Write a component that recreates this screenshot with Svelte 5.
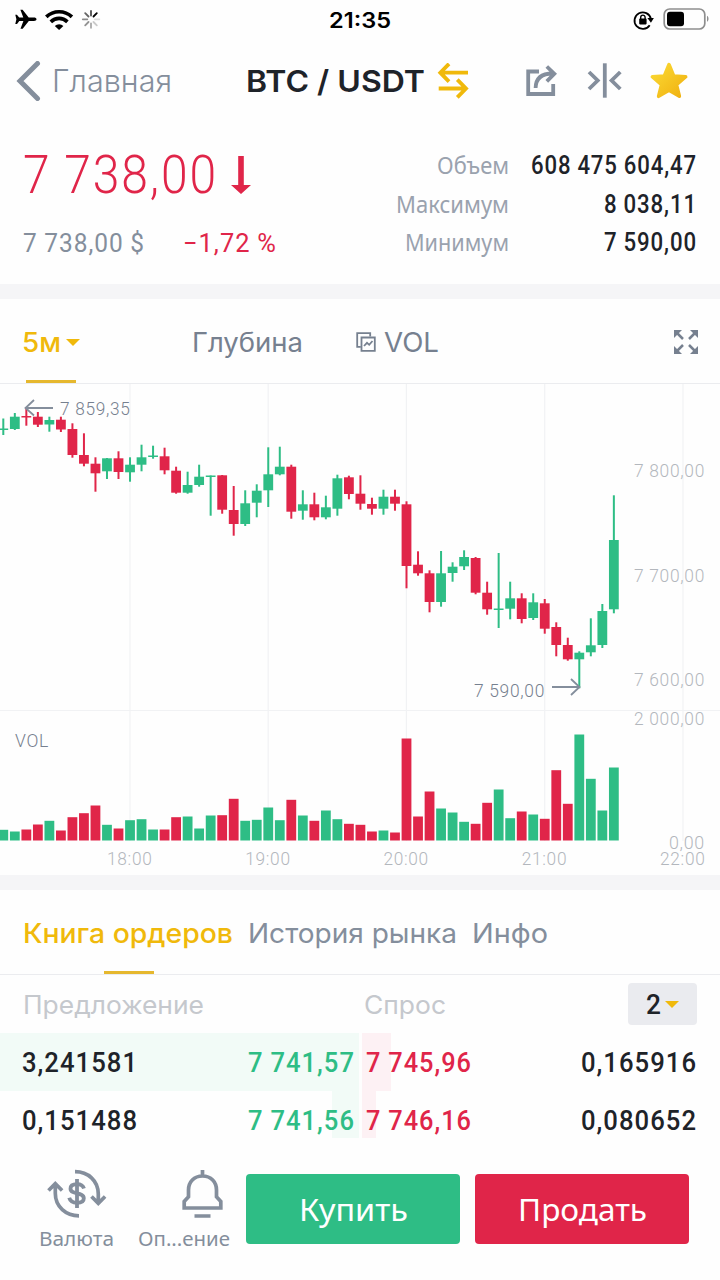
<script lang="ts">
  type Candle = [up: number, high: number, top: number, bottom: number, low: number, volume: number]

  const green = '#2ebd85'
  const red = '#e02549'

  // y positions on the chart, last value is the height of the volume bar
  const candles: Candle[] = [
    [1, 418.5, 428.5, 430, 435, 10.7], [1, 413, 416.7, 429, 430, 9],
    [0, 407, 416, 417.5, 425.7, 11], [0, 412, 416.7, 424.7, 427, 16],
    [1, 416.7, 420, 424.5, 431.7, 19.7], [0, 416.7, 419.7, 429.5, 432, 10],
    [0, 423.3, 429, 455, 457.7, 23.3], [0, 433.3, 455, 463.7, 466.3, 27.3],
    [0, 457.3, 463.7, 473.3, 491.7, 35], [1, 458, 458.3, 471.3, 479, 15.7],
    [0, 451.3, 458.3, 472, 479, 12], [1, 457.3, 464.7, 472.3, 481.7, 20.3],
    [1, 444.7, 457.3, 464.7, 471.3, 21.3], [1, 445.7, 455.5, 457, 458.7, 11],
    [0, 447.7, 456.3, 470.3, 474.3, 11], [0, 466.7, 470.7, 492.7, 493.7, 23.3],
    [1, 471.7, 485, 492.7, 493.7, 24], [1, 464.7, 476.7, 485, 486.7, 12],
    [1, 475.5, 475.5, 477, 515.7, 25], [0, 475, 475.3, 509.7, 513.7, 25.3],
    [0, 486, 510, 524, 535.7, 41.7], [1, 490.3, 503.3, 524, 526, 19.7],
    [1, 484.3, 490.7, 502.7, 517.3, 20.7], [1, 447.3, 474.3, 490.3, 507, 33],
    [1, 446.7, 466.7, 474.3, 475.3, 20.3], [0, 464.7, 466.7, 511.7, 518.7, 40.7],
    [1, 490.3, 504.3, 510.7, 519.7, 25], [0, 492.7, 504.3, 517.3, 520.3, 19.7],
    [1, 495.7, 507.3, 517.3, 519.3, 30], [1, 474.7, 478.3, 508.7, 515.7, 21.3],
    [0, 475.7, 477.3, 494, 499.3, 16.7], [0, 475.3, 493.7, 503.7, 509.7, 15.7],
    [0, 497.7, 504, 508.7, 514.7, 9], [1, 489.7, 496.7, 508.7, 514.7, 10],
    [0, 489.7, 496.7, 503.7, 510.7, 8], [0, 501.3, 504.3, 566, 588.3, 102],
    [0, 551.3, 564.7, 573.3, 575.7, 24], [0, 570.3, 573.3, 602, 612.3, 49],
    [1, 551, 573.3, 602, 606.7, 32], [1, 562.3, 566.7, 573, 581.7, 28],
    [1, 550.3, 557, 566.3, 570, 18.7], [0, 557, 558, 592.7, 594.3, 16.7],
    [0, 581.7, 592.7, 609.3, 614.7, 37.7], [1, 553, 608.5, 610, 628, 51],
    [1, 581.7, 598.3, 608.7, 619.3, 22.3], [0, 593.3, 598.3, 619, 623.3, 29],
    [1, 593.3, 602.3, 618, 620, 26], [0, 599, 603.3, 628.7, 633.7, 21.7],
    [0, 622.3, 627, 645, 656.3, 70.3], [0, 637.7, 645, 659.3, 660.7, 36.7],
    [1, 651.3, 652.7, 659.3, 688.3, 106], [1, 618.3, 645.3, 652.3, 656.3, 61.7],
    [1, 604, 611, 645, 648, 30], [1, 495.3, 540, 609.3, 613.3, 73]
  ]
  const step = 11.52
  const volumeBase = 840.5

  const hours = [
    { x: 130, label: '18:00' },
    { x: 268.2, label: '19:00' },
    { x: 406.4, label: '20:00' },
    { x: 544.7, label: '21:00' },
    { x: 683, label: '22:00' }
  ]
  const scale = [
    { y: 477, label: '7 800,00', width: 71 },
    { y: 581.7, label: '7 700,00', width: 71 },
    { y: 686, label: '7 600,00', width: 71 },
    { y: 724.5, label: '2 000,00', width: 71 },
    { y: 848.7, label: '0,00', width: 36 }
  ]
  const stats = [
    { label: 'Объем', labelWidth: 72, value: '608 475 604,47', width: 166 },
    { label: 'Максимум', labelWidth: 113, value: '8 038,11', width: 93 },
    { label: 'Минимум', labelWidth: 104, value: '7 590,00', width: 93 }
  ]
  const orders = [
    { bidAmount: '3,241581', bid: '7 741,57', bidDepth: 358.5, ask: '7 745,96', askAmount: '0,165916', askDepth: 28.5 },
    { bidAmount: '0,151488', bid: '7 741,56', bidDepth: 26.5, ask: '7 746,16', askAmount: '0,080652', askDepth: 14 }
  ]

  // Squeezes or stretches a line of text so it takes exactly `width` pixels
  function fit(node: HTMLElement, width: number) {
    const natural = node.getBoundingClientRect().width
    node.style.transformOrigin = '0 50%'
    node.style.transform = `scaleX(${width / natural})`
    node.style.marginRight = `${width - natural}px`
  }
</script>

<div class="app">
  <div class="status">
    <div class="status-left">
      <svg width="90" height="24" viewBox="14 8 90 24">
        <path d="M36.5 19.3c0-1.1-1.2-1.7-2.6-1.7h-5.2L22.6 9.8h-2.2l2.9 7.8h-4.1l-2.3-2.9h-1.6l1.1 4.6-1.1 4.6H17l2.3-2.9h4.1l-2.9 7.8h2.2l6.1-7.8h5.2c1.4 0 2.5-.6 2.5-1.7z" />
        <g fill="none" stroke="#000" stroke-width="3.7">
          <path d="M46.3 16.9a18.5 18.5 0 0 1 25.600 0" />
          <path d="M50.8 21.8a12 12 0 0 1 16.6 0" />
        </g>
        <path d="M54.8 25.9a6.2 6.2 0 0 1 8.600 0l-4.3 4z" />
        <g stroke="#000" stroke-width="1.8" stroke-linecap="round">
          <path d="M93.5 16.5l3.3-3.3" />
          <path d="M91 15.5v-4.5" opacity=".7" />
          <path d="M88.500 16.500l-3.300-3.300" opacity=".6" />
          <path d="M87.3 19.3h-4.5" opacity=".45" />
          <path d="M88.5 22l-3.3 3.3" opacity=".42" />
          <path d="M91 23.3v4.5" opacity=".33" />
          <path d="M93.5 22l3.3 3.3" opacity=".2" />
          <path d="M94.8 19.3h4.5" opacity=".12" />
        </g>
      </svg>
    </div>
    <span class="time"><span class="fit" use:fit={62}>21:35</span></span>
    <svg class="status-right" width="80" height="24" viewBox="630 8 80 24">
      <path d="M649.7 25.3a8.3 8.3 0 1 1 1.2-6.5" fill="none" stroke="#000" stroke-width="1.8" />
      <path d="M647.4 18h6.5l-3 4.7z" />
      <rect x="639.2" y="18.6" width="7.4" height="5.8" rx=".8" />
      <path d="M640.7 19v-1.7a2.200 2.200 0 0 1 4.400 0V19" fill="none" stroke="#000" stroke-width="1.4" />
      <rect x="664.2" y="9" width="40.6" height="20" rx="5.5" fill="none" stroke="#8e8e8e" stroke-width="1.7" />
      <rect x="667" y="11.7" width="17" height="14.6" rx="3" />
      <path d="M707 15.8c2 1 2 5 0 6z" fill="#8e8e8e" />
    </svg>
  </div>

  <header>
    <button class="back" aria-label="Назад">
      <svg width="26" height="40" viewBox="0 0 26 40">
        <path d="M22.5 2.500L5 20l17.5 17.500" fill="none" stroke="#848e9c" stroke-width="5" stroke-linecap="round" />
      </svg>
      <span class="fit" use:fit={120}>Главная</span>
    </button>
    <h1>
      <span class="fit" use:fit={179}>BTC / USDT</span>
      <svg width="32" height="36" viewBox="437 63 32 36" fill="none" stroke="#f0b90b" stroke-width="3.8">
        <path d="M468 72.7H441M449 63.8l-8.7 8.900 8.700 8.900" />
        <path d="M438.7 88.5h27M457.3 79.6l8.700 8.900-8.700 8.900" />
      </svg>
    </h1>
    <svg class="tools" width="170" height="40" viewBox="522 61 170 40">
      <g fill="none" stroke="#848e9c" stroke-width="3.8">
        <path d="M539 71.5H528.2V94H553.2V84" />
        <path d="M535.6 88c.2-9 5.500-14.500 17-14.500M546.800 66.500l7.500 7.300-7.500 7.500" />
        <path d="M604.8 63.3v34.4" />
        <path d="M589 72l8.700 8.500-8.700 8.500M620.300 72l-8.700 8.500 8.700 8.500" />
      </g>
      <defs>
        <linearGradient id="gold" x1="0" y1="0" x2="1" y2="1">
          <stop offset="0" stop-color="#fbdb35" />
          <stop offset="1" stop-color="#f0b010" />
        </linearGradient>
      </defs>
      <path d="M669 64.500l4.700 11.500 12 .800-9.200 8 2.900 11.500-10.400-6-10.400 6 2.900-11.500-9.200-8 12-.800z" fill="url(#gold)" stroke="url(#gold)" stroke-width="3.500" stroke-linejoin="round" />
    </svg>
  </header>

  <section class="summary">
    <div class="last">
      <div class="price">
        <span class="fit num" use:fit={195}>7 738,00</span>
        <svg width="20" height="40" viewBox="0 0 20 40">
          <path d="M7.200 0h5.600v29H20l-10 9-10-9h7.200z" fill="#e02549" />
        </svg>
      </div>
      <div class="change">
        <span class="fit num" use:fit={122}>7 738,00 $</span>
        <span class="fit num down" use:fit={94}>−1,72 %</span>
      </div>
    </div>
    <dl>
      {#each stats as s}
        <dt><span class="fit" use:fit={s.labelWidth}>{s.label}</span></dt>
        <dd><span class="fit num" use:fit={s.width}>{s.value}</span></dd>
      {/each}
    </dl>
  </section>

  <nav class="chart-tabs">
    <button class="interval">
      <span class="fit" use:fit={39}>5м</span>
      <i class="caret"></i>
    </button>
    <button class="depth"><span class="fit" use:fit={111}>Глубина</span></button>
    <button class="vol">
      <svg width="20" height="20" viewBox="0 0 20 20" fill="none" stroke="#76808f" stroke-width="1.8">
        <path d="M4.800 14.800H1.200V1.200h13v3.300" />
        <path d="M5.500 5.500h13.300v13.300H5.500z" />
        <path d="M8 14l3-3.200 2.200 2L16.500 9" />
      </svg>
      <span class="fit" use:fit={55}>VOL</span>
    </button>
    <svg class="expand" width="24" height="24" viewBox="0 0 24 24">
      <g fill="none" stroke="#76808f" stroke-width="2.500">
        <path d="M2 2l7 7M22 2l-7 7M2 22l7-7M22 22l-7-7" />
      </g>
      <path d="M0 0h8L0 8zM24 0h-8l8 8zM0 24h8l-8-8zM24 24h-8l8-8z" fill="#76808f" />
    </svg>
  </nav>

  <svg class="chart" width="720" height="491" viewBox="0 384 720 491">
    <g stroke="#f1f2f4" stroke-width="1.2">
      {#each hours as h}
        <line x1={h.x} x2={h.x} y1="384" y2="841" />
      {/each}
      <line x1="0" x2="720" y1="710.5" y2="710.5" />
    </g>
    {#each candles as [up, high, top, bottom, low, volume], i}
      {@const x = 3.3 + i * step}
      <g fill={up ? green : red}>
        <rect x={x - 1} y={high} width="2" height={low - high} />
        <rect x={x - 4.9} y={top} width="9.8" height={bottom - top} />
        <rect x={x - 4.9} y={volumeBase - volume} width="9.8" height={volume} />
      </g>
    {/each}
    <g class="axis">
      {#each scale as s}
        <text x={705 - s.width} y={s.y} textLength={s.width} lengthAdjust="spacingAndGlyphs">{s.label}</text>
      {/each}
      {#each hours as h}
        <text x={h.x - 23} y="864.7" textLength="45.5" lengthAdjust="spacingAndGlyphs">{h.label}</text>
      {/each}
    </g>
    <g class="marks">
      <text x="60" y="415.3" textLength="70.5" lengthAdjust="spacingAndGlyphs">7 859,35</text>
      <text x="474" y="696.7" textLength="71" lengthAdjust="spacingAndGlyphs">7 590,00</text>
      <text x="15" y="746.5" textLength="34" lengthAdjust="spacingAndGlyphs">VOL</text>
    </g>
    <g fill="none" stroke="#848e9c" stroke-width="1.8">
      <path d="M53 408H26M34 400l-8.500 8 8.500 7.500" />
      <path d="M552 687h27M571 679l8.500 8-8.500 8" />
    </g>
  </svg>

  <nav class="book-tabs">
    <button class="active"><span class="fit" use:fit={210}>Книга ордеров</span></button>
    <button><span class="fit" use:fit={209}>История рынка</span></button>
    <button><span class="fit" use:fit={76}>Инфо</span></button>
  </nav>

  <section class="book">
    <div class="book-head">
      <span class="bid-title"><span class="fit" use:fit={181}>Предложение</span></span>
      <span class="ask-title"><span class="fit" use:fit={82}>Спрос</span></span>
      <button class="digits">
        <span class="fit num" use:fit={16}>2</span>
        <i class="caret"></i>
      </button>
    </div>
    {#each orders as o}
      <div class="row">
        <div class="side bid">
          <div class="depth-bar" style="width: {o.bidDepth}px"></div>
          <span class="fit num" use:fit={116}>{o.bidAmount}</span>
          <span class="fit num" use:fit={107}>{o.bid}</span>
        </div>
        <div class="side ask">
          <div class="depth-bar" style="width: {o.askDepth}px"></div>
          <span class="fit num" use:fit={106}>{o.ask}</span>
          <span class="fit num" use:fit={116}>{o.askAmount}</span>
        </div>
      </div>
    {/each}
  </section>

  <footer>
    <button class="shortcut currency">
      <svg width="60" height="50" viewBox="47 1169 60 50">
        <g fill="none" stroke="#848e9c" stroke-width="3.7">
          <path d="M75 1171.600c13 0 23.300 9 23.300 22.500v9M91.500 1196.500l6.800 6.800 6.800-6.800" />
          <path d="M79 1215.800c-13 0-23.700-9-23.700-22.500v-9M48.500 1190.500l6.800-6.800 6.800 6.800" />
        </g>
        <g fill="none" stroke="#848e9c" stroke-width="3.8">
          <path d="M77 1179v29" />
          <path d="M84 1188.500c-1-3-3.500-4.300-7-4.300-4 0-6.500 1.700-6.500 4.500 0 6.300 13.300 3 13.300 9.500 0 3-2.800 4.600-6.800 4.600-4 0-6.800-1.500-7.800-5" />
        </g>
      </svg>
      <span class="fit" use:fit={75}>Валюта</span>
    </button>
    <button class="shortcut alerts">
      <svg width="42" height="50" viewBox="181 1169 42 50">
        <path d="M202.500 1170v5M184.200 1208h36.600v-6.500l-4.300-4.700v-6.800c0-8-5.500-14-14-14s-14 6-14 14v6.800l-4.300 4.700zM194.500 1216h16" fill="none" stroke="#848e9c" stroke-width="3.7" />
      </svg>
      <span class="fit" use:fit={92}>Оп...ение</span>
    </button>
    <button class="trade buy"><span class="fit" use:fit={109}>Купить</span></button>
    <button class="trade sell"><span class="fit" use:fit={129}>Продать</span></button>
  </footer>
</div>

<style>
  :global(body) {
    margin: 0;
    background: #fff;
  }

  .app {
    width: 720px;
    height: 1280px;
    overflow: hidden;
    background: #fefefe;
    color: #1e2329;
    font-family: Inter, 'Liberation Sans', sans-serif;
  }

  button {
    padding: 0;
    border: 0;
    background: none;
    color: inherit;
    font: inherit;
  }

  svg {
    display: block;
    flex: none;
  }

  .fit {
    display: inline-block;
    flex: none;
    white-space: pre;
  }

  .num {
    font-family: Roboto, 'Liberation Sans', sans-serif;
    letter-spacing: 0.04em;
    word-spacing: -0.02em;
  }

  .status {
    display: grid;
    grid-template-columns: 1fr auto 1fr;
    align-items: center;
    height: 40px;
    padding: 0 10px 0 14px;
    box-sizing: border-box;
    color: #000;
  }

  .status-right {
    justify-self: end;
  }

  .time {
    margin-right: 4px;
    font-size: 21.5px;
    font-weight: 600;
  }

  header {
    display: flex;
    align-items: center;
    height: 82px;
    padding: 0 28px 0 15px;
    font-size: 30.5px;
  }

  .back {
    display: flex;
    align-items: center;
    gap: 11px;
    width: 231px;
    color: #848e9c;
    font-weight: 350;
  }

  h1 {
    display: flex;
    align-items: center;
    gap: 12px;
    margin: 0;
    font-size: inherit;
    font-weight: 600;
  }

  h1 .fit,
  .back .fit {
    margin-top: -1px;
  }

  .tools {
    margin-left: auto;
  }

  .summary {
    display: flex;
    justify-content: space-between;
    height: 162px;
    padding: 25px 23px 0;
    box-sizing: border-box;
  }

  .price {
    display: flex;
    align-items: center;
    gap: 13px;
    color: #e02549;
    font-size: 53px;
    font-weight: 350;
    line-height: 57px;
  }

  .price svg {
    margin-top: 1px;
  }

  .change {
    display: flex;
    gap: 38px;
    margin-top: 20px;
    color: #848e9c;
    font-size: 25.5px;
    font-weight: 450;
    line-height: 38px;
  }

  .down {
    color: #e02549;
  }

  dl {
    display: grid;
    grid-template-columns: auto 166px;
    grid-auto-rows: 38.5px;
    column-gap: 22px;
    justify-items: end;
    align-content: start;
    margin: 0;
    line-height: 38px;
  }

  dt,
  dd {
    display: flex;
  }

  dt {
    margin-top: -1px;
    color: #9aa2ae;
    font-family: 'Noto Sans', sans-serif;
    font-size: 23px;
  }

  dd {
    margin: 0;
    font-size: 25px;
    font-weight: 500;
  }

  .chart-tabs {
    display: flex;
    align-items: center;
    height: 100px;
    padding: 2px 22px 0;
    box-sizing: border-box;
    border-top: 15px solid #f5f5f7;
    border-bottom: 1px solid #ebecef;
    color: #76808f;
    font-size: 27px;
  }

  .interval,
  .active {
    position: relative;
    color: #f0b90b;
    font-weight: 500;
  }

  .interval {
    display: flex;
    align-items: center;
    gap: 5px;
    width: 170px;
  }

  .interval::after,
  .active::after {
    content: '';
    position: absolute;
    left: 4px;
    bottom: -24px;
    width: 50px;
    height: 3px;
    background: #e6b82e;
  }

  .caret {
    border: 7.5px solid transparent;
    border-top: 7.5px solid #f0b90b;
    border-bottom: 0;
  }

  .depth {
    width: 164px;
    text-align: left;
  }

  .vol {
    display: flex;
    align-items: center;
    gap: 8px;
  }

  .expand {
    margin-left: auto;
  }

  .chart {
    font-family: Roboto, 'Liberation Sans', sans-serif;
    font-size: 19px;
    font-weight: 300;
    letter-spacing: 0.04em;
  }

  .axis {
    fill: #b3b7bd;
  }

  .marks {
    fill: #76808f;
  }

  .book-tabs {
    display: flex;
    align-items: center;
    gap: 15px;
    height: 100px;
    padding: 3px 22px 0 23px;
    box-sizing: border-box;
    border-top: 15px solid #f5f5f7;
    border-bottom: 1px solid #ebecef;
    color: #848e9c;
    font-size: 27px;
  }

  .active::after {
    left: 81px;
  }

  .book-head {
    display: flex;
    align-items: center;
    height: 58px;
    padding: 0 23px;
    color: #c5c8cd;
    font-size: 25.5px;
  }

  .bid-title {
    width: 341px;
  }

  .bid-title,
  .ask-title {
    display: flex;
  }

  .digits {
    display: flex;
    align-items: center;
    justify-content: center;
    gap: 3px;
    width: 69px;
    height: 42px;
    margin-left: auto;
    border-radius: 4px;
    background: #eaebef;
    color: #1e2329;
    font-size: 28px;
    font-weight: 500;
  }

  .row {
    display: flex;
    gap: 3.5px;
    height: 57.5px;
    font-size: 28.5px;
    font-weight: 500;
  }

  .side {
    position: relative;
    display: flex;
    align-items: center;
    justify-content: space-between;
    box-sizing: border-box;
    padding-top: 2px;
  }

  .bid {
    width: 358.5px;
    padding-right: 4px;
    padding-left: 22px;
  }

  .ask {
    flex: 1;
    padding-right: 23px;
    padding-left: 4px;
  }

  .depth-bar {
    position: absolute;
    top: 0;
    bottom: 0;
  }

  .side .num {
    position: relative;
  }

  .bid .depth-bar {
    right: 0;
    background: #f2fbf7;
  }

  .ask .depth-bar {
    left: 0;
    background: #fdf1f4;
  }

  .bid .num:last-child {
    color: #2ebd85;
  }

  .ask .num:nth-child(2) {
    color: #e02549;
  }

  footer {
    position: relative;
    display: flex;
    align-items: flex-start;
    height: 142px;
    margin-top: -10px;
    padding: 31px 31px 0 39px;
    box-sizing: border-box;
    background: #fefefe;
    font-family: 'Noto Sans', sans-serif;
  }

  .shortcut {
    display: flex;
    flex-direction: column;
    align-items: flex-start;
    gap: 5px;
    color: #848e9c;
    font-size: 20px;
    line-height: 30px;
  }

  .currency {
    width: 99px;
  }

  .currency svg {
    margin-left: 8px;
  }

  .alerts {
    width: 108px;
  }

  .alerts svg {
    margin-left: 43px;
  }

  .trade {
    width: 214px;
    height: 70px;
    margin-top: 5px;
    border-radius: 4px;
    color: #fff;
    font-size: 30.5px;
  }

  .buy {
    background: #2ebd85;
  }

  .sell {
    margin-left: auto;
    background: #e02549;
  }
</style>
